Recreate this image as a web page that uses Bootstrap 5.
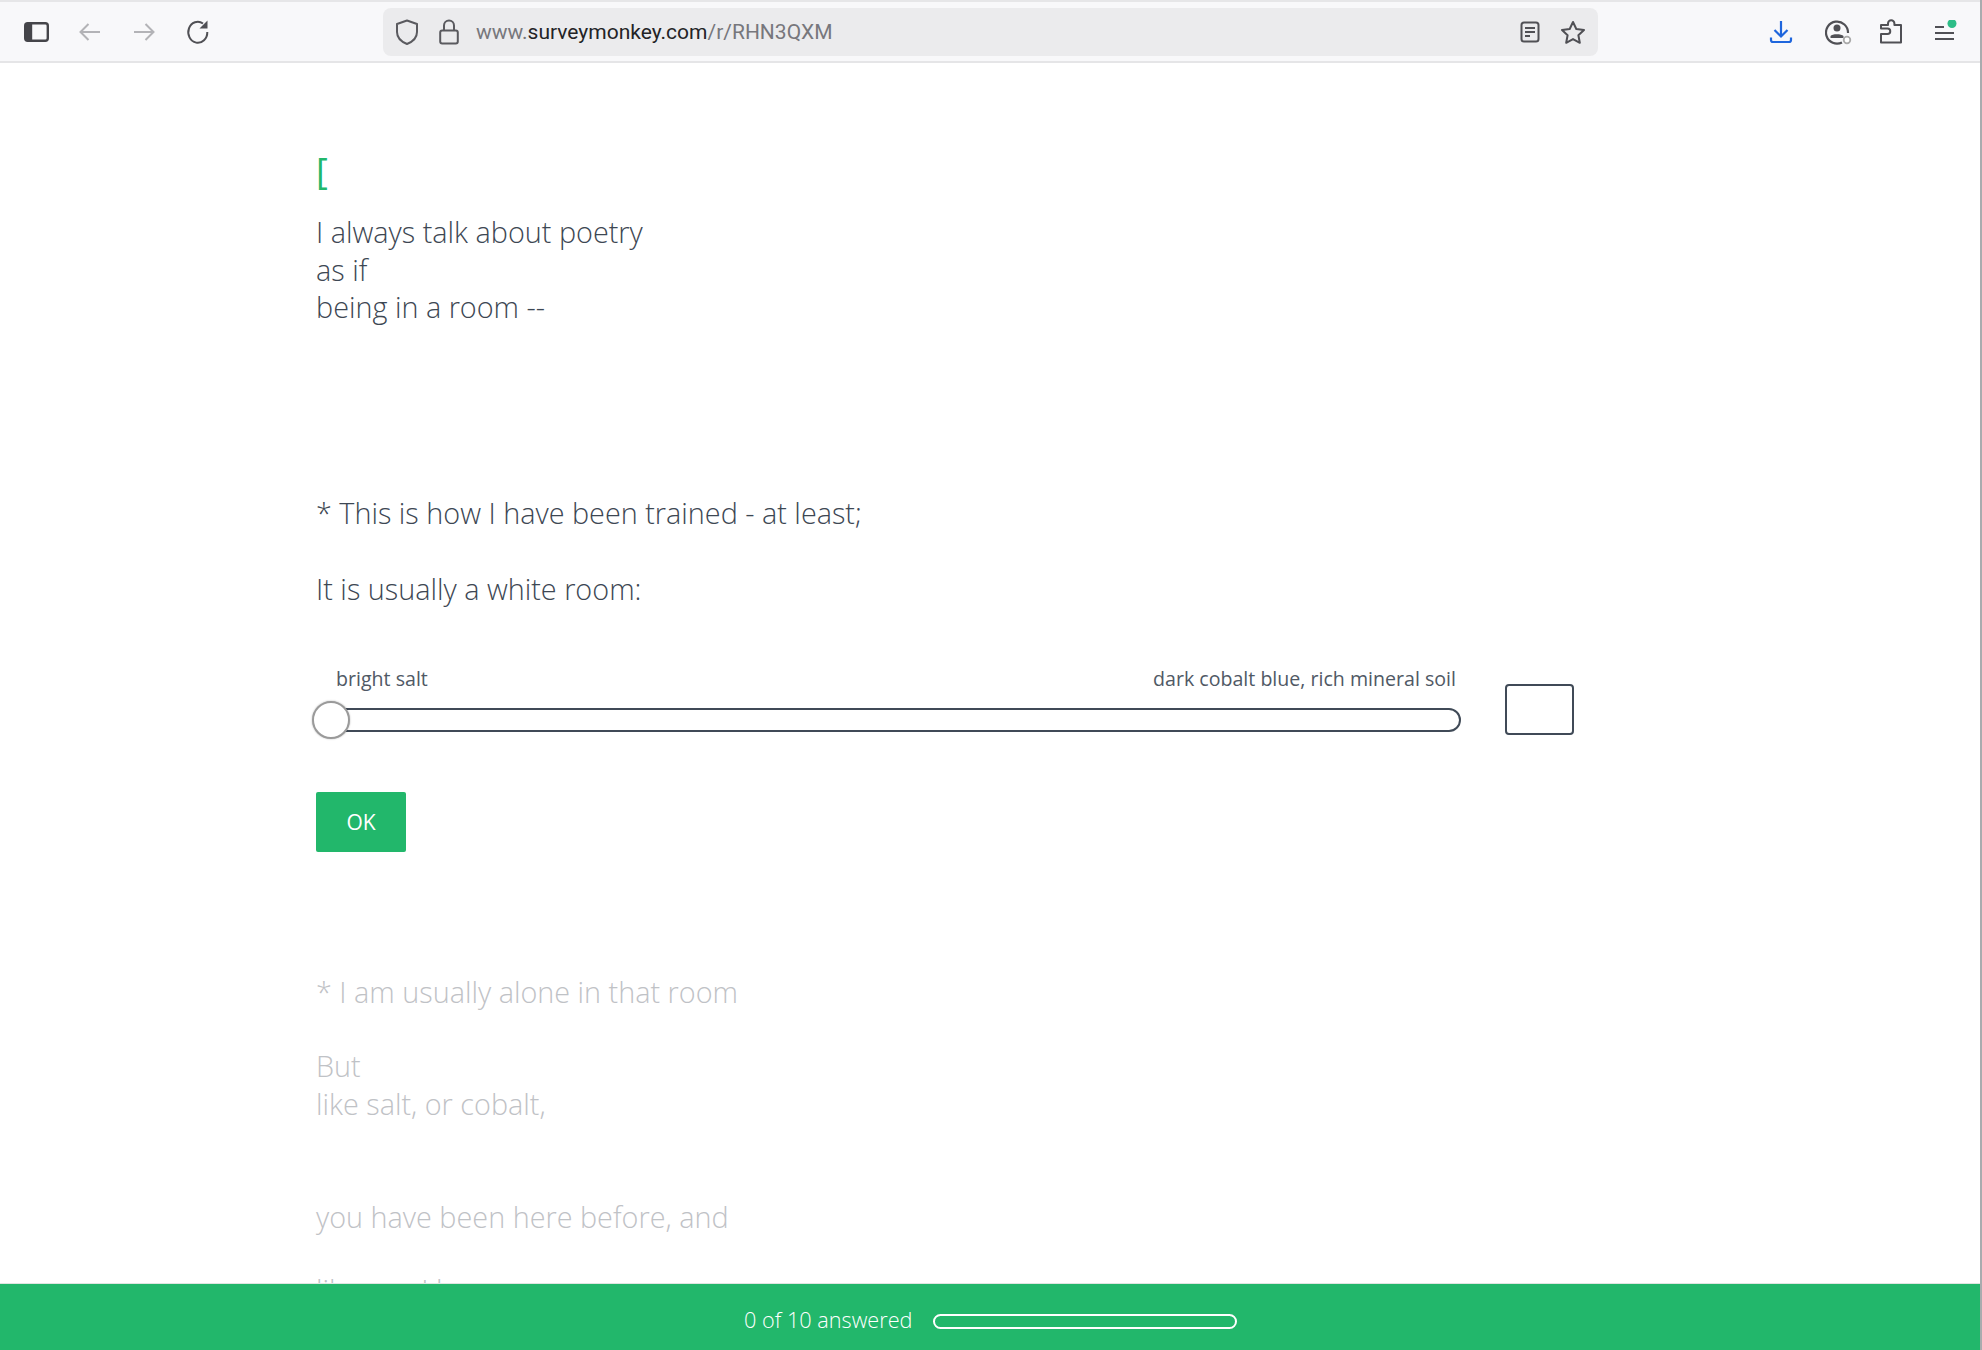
<!DOCTYPE html>
<html lang="en">
<head>
<meta charset="utf-8">
<title>Survey</title>
<link href="https://cdn.jsdelivr.net/npm/bootstrap@5.3.0/dist/css/bootstrap.min.css" rel="stylesheet">
<style>
html,body{height:1350px;overflow:hidden;background:#fff}
body{font-family:"Open Sans","Liberation Sans",sans-serif;color:#3d4753;position:relative;font-weight:300}
.edge{position:absolute;top:0;right:0;width:2px;height:1350px;background:#a9abae;z-index:5}
.chrome{height:63px;background:#f8f8fa;border-top:2px solid #e6e6e8;border-bottom:2px solid #e5e5e7;padding-left:24px;padding-right:26px}
.chrome svg{display:block;flex:none}
.navset{gap:30px;width:359px}
.urlbar{width:1215px;height:48px;background:#ebebed;border-radius:8px;padding:0 12px 0 12px}
.urltext{font-family:"Roboto","Liberation Sans",sans-serif;font-weight:400;font-size:21px;color:#77777c;margin-left:17px;padding-top:2px}
.urltext b{font-weight:400;color:#232326}
.tools{margin-left:auto;gap:31px}
.pagebody{padding:85px 0 0 316px;font-size:28.8px;line-height:37.7px}
.brk{color:#22b76b;font-size:36px;line-height:40px;height:65px;font-weight:400;padding-top:3px}
.qtext{margin:0}
.sliderwrap{width:1258px;margin-top:57px}
.scale{width:1145px}
.lab{font-size:19.6px;line-height:28px;padding:0 5px 0 20px;color:#505965;font-weight:400}
.track{height:24px;border:2px solid #404a57;border-radius:12px;margin-top:15px;position:relative}
.knob{position:absolute;left:-6px;top:-9px;width:38px;height:38px;border-radius:50%;background:#fff;border:2px solid #9a9a9a;box-shadow:0 0 2px rgba(0,0,0,.3)}
.numbox{width:69px;height:51px;border:2px solid #404a57;border-radius:4px;margin-top:19px;background:#fff}
.okbtn{background:#22b76b;border:0;border-radius:2px;color:#fff;width:90px;height:60px;font-size:21px;margin-top:57px;padding:2px 0 0;font-weight:400}
.okbtn:hover{background:#22b76b;color:#fff}
.faded{color:#bfc2c6;margin-top:121px}
.progressbar{position:absolute;left:0;right:0;bottom:0;height:67px;background:#22b76b;color:#fff;font-size:21.7px;border-top:1px solid #dfe5e1;z-index:3;padding-left:744px;padding-top:7px}
.pbar{width:304px;height:15px;border:2px solid #fff;border-radius:8px;margin-left:20px;margin-top:1px}
</style>
</head>
<body>
<div class="edge"></div>
<div class="chrome d-flex align-items-center">
  <div class="d-flex align-items-center navset">
    <svg width="25" height="20" viewBox="0 0 25 20"><rect x="1.2" y="1.2" width="22.6" height="17.6" rx="2.5" fill="none" stroke="#45454a" stroke-width="2.4"/><rect x="1.2" y="1.2" width="7" height="17.6" fill="#45454a"/></svg>
    <svg width="24" height="20" viewBox="0 0 24 20" style="margin-left:-1px"><path d="M22 10H3M10.500 2 2.500 10l8 8" fill="none" stroke="#b3b3b7" stroke-width="2"/></svg>
    <svg width="24" height="20" viewBox="0 0 24 20"><path d="M2 10h19M13.500 2l8 8-8 8" fill="none" stroke="#b3b3b7" stroke-width="2"/></svg>
    <svg width="24" height="26" viewBox="0 0 24 26"><path d="M17 4.500A9.500 10.500 0 1 0 21.300 13" fill="none" stroke="#505055" stroke-width="2"/><path d="M21.500 1.500v8h-8z" fill="#505055"/></svg>
  </div>
  <div class="urlbar d-flex align-items-center">
    <svg width="24" height="26" viewBox="0 0 24 26"><path d="M12 1.500 22 5v8c0 6-5 10-10 12C7 23 2 19 2 13V5z" fill="none" stroke="#5a5a5f" stroke-width="2" stroke-linejoin="round"/></svg>
    <svg width="20" height="26" viewBox="0 0 20 26" style="margin-left:20px"><rect x="1.200" y="11.500" width="17.600" height="13" rx="2" fill="none" stroke="#5a5a5f" stroke-width="2"/><path d="M5 11.500V6.500a5 5 0 0 1 10 0v5" fill="none" stroke="#5a5a5f" stroke-width="2"/></svg>
    <span class="urltext">www.<b>surveymonkey.com</b>/r/RHN3QXM</span>
    <div class="d-flex align-items-center ms-auto" style="gap:20px">
      <svg width="20" height="22" viewBox="0 0 20 22"><rect x="1.500" y="1.500" width="17" height="19" rx="2.500" fill="none" stroke="#505055" stroke-width="2"/><path d="M5 7h10M5 11h10M5 15h5" stroke="#505055" stroke-width="2"/></svg>
      <svg width="26" height="24" viewBox="0 0 26 24"><path d="m13 2 3.300 7 7.700 1-5.600 5.300 1.400 7.500L13 19.100 6.200 22.800l1.400-7.500L2 10l7.700-1z" fill="none" stroke="#505055" stroke-width="2" stroke-linejoin="round"/></svg>
    </div>
  </div>
  <div class="tools d-flex align-items-center">
    <svg width="24" height="24" viewBox="0 0 24 24" style="margin-left:-2px;margin-right:1px"><path d="M12 1v15M5.500 10l6.500 6.500 6.500-6.500M2 17.500V20a2 2 0 0 0 2 2h16a2 2 0 0 0 2-2v-2.500" fill="none" stroke="#1f66dd" stroke-width="2.200"/></svg>
    <svg width="28" height="26" viewBox="0 0 28 26" style="margin-right:-5px"><path d="M17 23.400A11 11 0 1 1 23 14" fill="none" stroke="#505055" stroke-width="2.200"/><circle cx="12" cy="9" r="3.500" fill="#505055"/><path d="M5.500 17c1.500-2.500 11-2.500 13 0v2h-13z" fill="#505055"/><circle cx="22" cy="21" r="3.300" fill="#fff" stroke="#aaa" stroke-width="1.800"/></svg>
    <svg width="24" height="25" viewBox="0 0 24 25"><path d="M2 23.500V15h6.500a2.700 2.700 0 0 0 0-5.500H2V6h7V4.500a3.200 3.200 0 0 1 6.400 0V6H22v17.500z" fill="none" stroke="#505055" stroke-width="2" stroke-linejoin="round"/></svg>
    <svg width="24" height="24" viewBox="0 0 24 24" style="margin-right:-2px"><path d="M1 7h9M1 13h19M1 19h19" stroke="#505055" stroke-width="2"/><circle cx="18" cy="3.500" r="4.500" fill="#2dbd87"/></svg>
  </div>
</div>

<main class="pagebody">
  <div class="brk">[</div>
  <p class="qtext">I always talk about poetry<br>as if<br>being in a room --</p>
  <p class="qtext" style="margin-top:168px">* This is how I have been trained - at least;</p>
  <p class="qtext" style="margin-top:38px">It is usually a white room:</p>
  <div class="sliderwrap d-flex justify-content-between">
    <div class="scale">
      <div class="lab d-flex justify-content-between"><span>bright salt</span><span>dark cobalt blue, rich mineral soil</span></div>
      <div class="track"><div class="knob"></div></div>
    </div>
    <div class="numbox"></div>
  </div>
  <button class="btn okbtn d-block" type="button">OK</button>
  <div class="faded">
    <p class="qtext">* I am usually alone in that room</p>
    <p class="qtext" style="margin-top:37px">But<br>like salt, or cobalt,</p>
    <p class="qtext" style="margin-top:75px">you have been here before, and</p>
    <p class="qtext" style="margin-top:36px">like me, I hope</p>
  </div>
</main>

<div class="progressbar d-flex align-items-center"><span>0 of 10 answered</span><div class="pbar"></div></div>
<script src="https://cdn.jsdelivr.net/npm/bootstrap@5.3.0/dist/js/bootstrap.bundle.min.js"></script>
</body>
</html>
